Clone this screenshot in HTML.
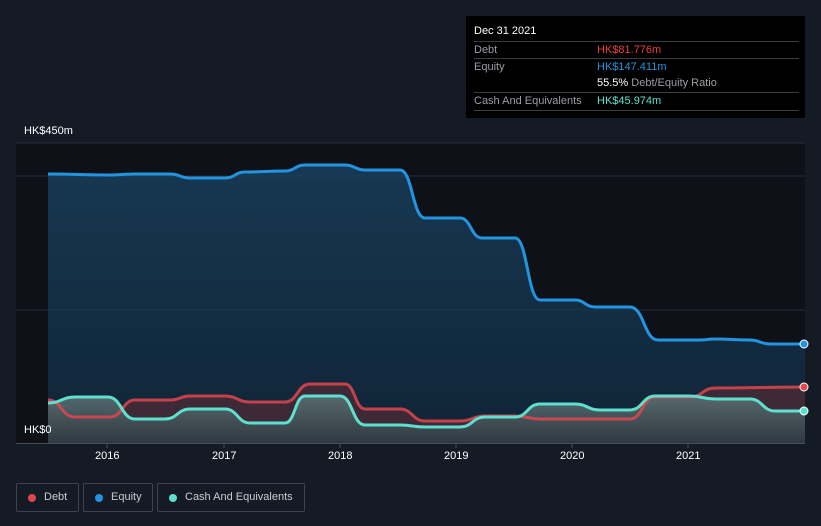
<!DOCTYPE html><html><head><meta charset="utf-8"><style>
body{margin:0;width:821px;height:526px;background:#151b24;font-family:"Liberation Sans",sans-serif;overflow:hidden;position:relative}
.tt{position:absolute;left:466px;top:16px;width:339px;height:102px;background:#000;color:#fff;font-size:11px}
.row{position:absolute;left:8px;width:325px;border-top:1px solid #3a3d42;height:17px;line-height:17px;color:#9a9da3}
.row span{position:absolute;left:123px}
.lg{position:absolute;top:483px;height:27px;border:1px solid #3d424b;border-radius:2px;color:#c8ccd2;font-size:11px;line-height:27px}
.dot{position:absolute;top:10px;width:8px;height:8px;border-radius:50%}
.ax{position:absolute;color:#fff;font-size:11px}
</style></head><body>
<svg width="821" height="526" style="position:absolute;left:0;top:0">
<defs>
<linearGradient id="ge" x1="0" y1="0" x2="0" y2="1"><stop offset="0" stop-color="#1a4566" stop-opacity=".75"/><stop offset="1" stop-color="#12304a" stop-opacity=".6"/></linearGradient>
<linearGradient id="gc" x1="0" y1="0" x2="0" y2="1"><stop offset="0" stop-color="#5a7072"/><stop offset="1" stop-color="#2e3a42"/></linearGradient>
</defs>
<rect x="16" y="143" width="789" height="300" fill="#0e1218"/>
<line x1="16" y1="143" x2="805" y2="143" stroke="#2a2f37"/>
<line x1="16" y1="176" x2="805" y2="176" stroke="#262b33"/>
<line x1="16" y1="310" x2="805" y2="310" stroke="#262b33"/>
<path id="ea" fill="url(#ge)"/><path id="da" fill="#4a2a36" fill-opacity=".8"/><path id="ca" fill="url(#gc)" fill-opacity=".9"/>
<path id="el" fill="none" stroke="#2394df" stroke-width="3"/>
<path id="dl" fill="none" stroke="#e0474f" stroke-width="3" stroke-opacity=".85"/>
<path id="cl" fill="none" stroke="#5ee0cf" stroke-width="3"/>
<line x1="16" y1="443.5" x2="805" y2="443.5" stroke="#4a4f57"/>
<g stroke="#4a4f57"><line x1="107" y1="443" x2="107" y2="448"/><line x1="224" y1="443" x2="224" y2="448"/><line x1="340" y1="443" x2="340" y2="448"/><line x1="456" y1="443" x2="456" y2="448"/><line x1="572" y1="443" x2="572" y2="448"/><line x1="688" y1="443" x2="688" y2="448"/></g>
<circle cx="804" cy="344" r="4" fill="#2394df" stroke="#fff" stroke-width="1"/>
<circle cx="804" cy="387" r="4" fill="#e0474f" stroke="#fff" stroke-width="1"/>
<circle cx="804" cy="411" r="4" fill="#5ee0cf" stroke="#fff" stroke-width="1"/>
</svg>
<script>
function P(a){var d="M"+a[0][0]+" "+a[0][1];for(var i=1;i<a.length;i++){var p=a[i-1],q=a[i],m=(p[0]+q[0])/2;d+=" C"+m+" "+p[1]+" "+m+" "+q[1]+" "+q[0]+" "+q[1];}return d;}
var E=[[48,174],[110,175],[135,174],[170,174],[190,178],[225,178],[245,172],[285,171],[305,165],[345,165],[365,170],[400,170],[425,218],[460,218],[482,238],[515,238],[540,300],[575,300],[595,307],[630,307],[658,340],[700,340],[715,339],[750,340],[770,344],[805,344]];
var D=[[48,400],[75,417],[110,417],[135,400],[170,400],[190,396],[225,396],[250,402],[285,402],[310,384],[345,384],[365,409],[400,409],[425,421],[460,421],[485,416],[515,416],[540,419],[630,419],[655,397],[690,397],[715,388],[805,387]];
var C=[[48,403],[75,397],[108,397],[135,419],[165,419],[190,409],[225,409],[250,423],[285,423],[305,396],[340,396],[365,425],[400,425],[425,427],[460,427],[485,417],[515,417],[540,404],[575,404],[600,410],[630,410],[655,396],[690,396],[715,399],[750,399],[775,411],[805,411]];
function S(id,a,l){document.getElementById(id+"l").setAttribute("d",P(a));document.getElementById(id+"a").setAttribute("d",P(a)+" L805 443 L48 443 Z");}
S("e",E);S("d",D);S("c",C);
</script>
<div class="ax" style="left:24px;top:125px">HK$450m</div>
<div class="ax" style="left:24px;top:424px">HK$0</div>
<div class="ax" style="left:95px;top:450px">2016</div>
<div class="ax" style="left:212px;top:450px">2017</div>
<div class="ax" style="left:328px;top:450px">2018</div>
<div class="ax" style="left:444px;top:450px">2019</div>
<div class="ax" style="left:560px;top:450px">2020</div>
<div class="ax" style="left:676px;top:450px">2021</div>
<div class="tt">
<div style="position:absolute;left:8px;top:9px;font-size:11px">Dec 31 2021</div>
<div class="row" style="top:25px">Debt<span style="color:#e8403f">HK$81.776m</span></div>
<div class="row" style="top:42px">Equity<span style="color:#2394df">HK$147.411m</span></div>
<div class="row" style="top:59px;border-top:none"><span><b style="color:#fff;font-weight:normal">55.5%</b> Debt/Equity Ratio</span></div>
<div class="row" style="top:76px">Cash And Equivalents<span style="color:#5ee0cf">HK$45.974m</span></div>
<div class="row" style="top:94px;height:0"></div>
</div>
<div class="lg" style="left:16px;width:61px"><div class="dot" style="left:11px;background:#e0474f"></div><span style="position:absolute;left:27px">Debt</span></div>
<div class="lg" style="left:83px;width:68px"><div class="dot" style="left:11px;background:#2394df"></div><span style="position:absolute;left:27px">Equity</span></div>
<div class="lg" style="left:157px;width:146px"><div class="dot" style="left:11px;background:#5ee0cf"></div><span style="position:absolute;left:27px">Cash And Equivalents</span></div>
</body></html>
